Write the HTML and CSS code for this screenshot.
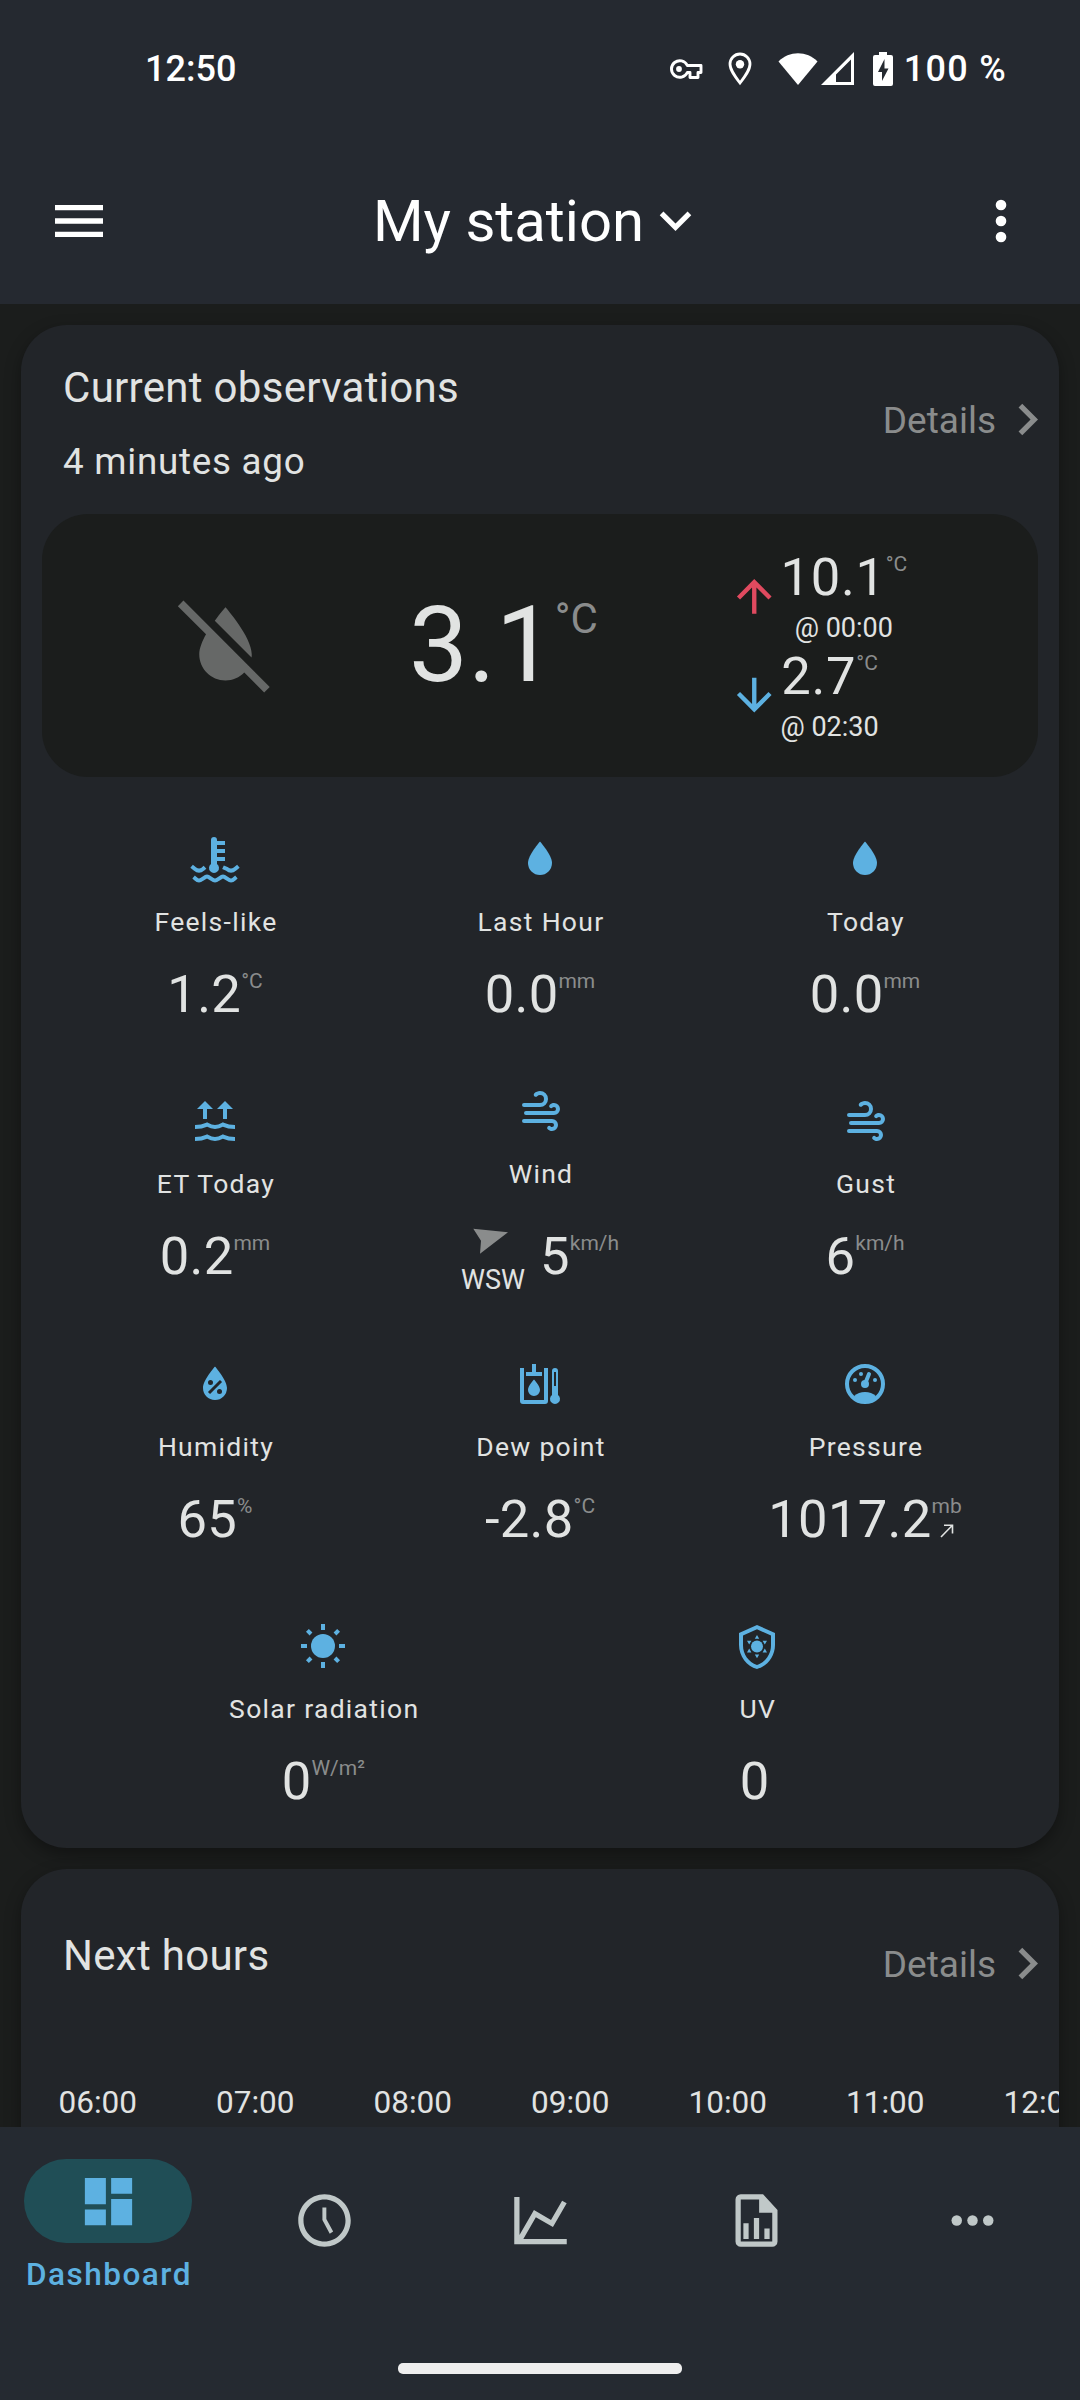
FILE: index.html
```html
<!DOCTYPE html>
<html lang="en">
<head>
  <meta charset="UTF-8">
  <title>My station</title>
  <meta name="viewport" content="width=device-width, initial-scale=1.0">
  <link rel="stylesheet" href="styles.css">
</head>
<body>
  <header class="header">
    <div class="statusbar">
      <span class="clock">12:50</span>
      <div class="status-icons">
        <svg class="st-key" width="34" height="22" viewBox="0 0 34 22"><path d="M18.3 7.5A8.3 8.3 0 1 0 18.3 14.5H21V19.5H29V14.5H32V7.5Z" fill="none" stroke="#fff" stroke-width="2.9" stroke-linejoin="round"/><circle cx="10" cy="11" r="2.9" fill="#fff"/></svg>
        <svg class="st-pin" width="24" height="34" viewBox="0 0 24 34"><path d="M12 31C7 24.5 2 18 2 12A10 10 0 0 1 22 12C22 18 17 24.5 12 31Z" fill="none" stroke="#fff" stroke-width="2.8"/><circle cx="12" cy="12.2" r="4.2" fill="#fff"/></svg>
        <svg class="st-wifi" width="40" height="34" viewBox="0 0 40 34"><path d="M20 33L.5 9.5C11-1.5 29-1.5 39.5 9.5Z" fill="#fff"/></svg>
        <svg class="st-signal" width="34" height="34" viewBox="0 0 34 34"><path d="M0 33L33 0V33ZM15 30H30V7.5L15 22.5Z" fill="#fff" fill-rule="evenodd"/></svg>
        <svg class="st-battery" width="20" height="34" viewBox="0 0 20 34"><path d="M6 0H14V3H18Q20 3 20 5V32Q20 34 18 34H2Q0 34 0 32V5Q0 3 2 3H6ZM11.5 7L5 20H9V29L15.5 16.5H11.5Z" fill="#fff" fill-rule="evenodd"/></svg>
        <span class="battery-text">100 %</span>
      </div>
    </div>
    <div class="appbar">
      <svg class="icon-64" viewBox="0 0 24 24"><path d="M3,6H21V8H3V6M3,11H21V13H3V11M3,16H21V18H3V16Z"/></svg>
      <div class="title">
        <span>My station</span>
        <svg class="icon-63" viewBox="0 0 24 24"><path d="M7.41,8.58L12,13.17L16.59,8.58L18,10L12,16L6,10L7.41,8.58Z"/></svg>
      </div>
      <svg class="icon-64" viewBox="0 0 24 24"><circle cx="12" cy="6" r="2"/><circle cx="12" cy="12" r="2"/><circle cx="12" cy="18" r="2"/></svg>
    </div>
  </header>

  <main class="content">
    <section class="card current">
      <div class="card-head">
        <div class="card-title">
          <h2>Current observations</h2>
          <p class="updated">4 minutes ago</p>
        </div>
        <a class="details"><span>Details</span><svg class="icon-63" viewBox="0 0 24 24"><path d="M8.59,16.58L13.17,12L8.59,7.41L10,6L16,12L10,18L8.59,16.58Z"/></svg></a>
      </div>

      <div class="hero">
        <div class="hero-icon">
          <svg width="105" height="105" viewBox="0 0 24 24"><path d="M20.84 22.73L16.29 18.18C15.2 19.3 13.69 20 12 20C8.69 20 6 17.31 6 14C6 12.67 6.67 11.03 7.55 9.44L1.11 3L2.39 1.73L22.11 21.46L20.84 22.73M18 14C18 10 12 3.25 12 3.25S10.84 4.55 9.55 6.35L17.95 14.75C18 14.5 18 14.25 18 14Z"/></svg>
        </div>
        <div class="hero-temp"><span>3.1</span><sup>°C</sup></div>
        <div class="minmax">
          <div class="minmax-row">
            <svg class="up" viewBox="0 0 24 24"><path d="M13,20H11V8L5.5,13.5L4.08,12.08L12,4.16L19.92,12.08L18.5,13.5L13,8V20Z"/></svg>
            <div class="minmax-text">
              <div class="value"><span>10.1</span><sup>°C</sup></div>
              <div class="time">@ 00:00</div>
            </div>
          </div>
          <div class="minmax-row">
            <svg class="down" viewBox="0 0 24 24"><path d="M11,4H13V16L18.5,10.5L19.92,11.92L12,19.84L4.08,11.92L5.5,10.5L11,16V4Z"/></svg>
            <div class="minmax-text">
              <div class="value"><span>2.7</span><sup>°C</sup></div>
              <div class="time">@ 02:30</div>
            </div>
          </div>
        </div>
      </div>

      <div class="grid">
        <div class="row">
          <div class="cell">
            <svg class="icon" viewBox="0 0 24 24">
              <path d="M10 2.5A1.5 1.5 0 0 1 13 2.5V3H17V5H13V7H17V9H13V11H17V13H13V14.5A2.5 2.5 0 1 1 10 14.5Z"/>
              <path class="line" d="M.3 15.6L2 17C3.3 18.1 4.7 18.1 6 17L7 16.1M16 16.1L18 17C19.3 18.1 20.7 18.1 22 17L23.7 15.6M1.3 21C2.5 22 3 22.8 4 22.8S7 20.8 8 20.8S11 22.8 12 22.8S15 20.8 16 20.8S19 22.8 20 22.8S21.5 22 22.7 21"/>
            </svg>
            <div class="label">Feels-like</div>
            <div class="value"><span>1.2</span><sup>°C</sup></div>
          </div>
          <div class="cell">
            <svg class="icon" viewBox="0 0 24 24"><path d="M12,20A6,6 0 0,1 6,14C6,10 12,3.25 12,3.25C12,3.25 18,10 18,14A6,6 0 0,1 12,20Z"/></svg>
            <div class="label">Last Hour</div>
            <div class="value"><span>0.0</span><sup>mm</sup></div>
          </div>
          <div class="cell">
            <svg class="icon" viewBox="0 0 24 24"><path d="M12,20A6,6 0 0,1 6,14C6,10 12,3.25 12,3.25C12,3.25 18,10 18,14A6,6 0 0,1 12,20Z"/></svg>
            <div class="label">Today</div>
            <div class="value"><span>0.0</span><sup>mm</sup></div>
          </div>
        </div>

        <div class="row">
          <div class="cell">
            <svg class="icon" viewBox="0 0 24 24">
              <path d="M7 2L11 6H8V11H6V6H3ZM17 2L21 6H18V11H16V6H13Z"/>
              <path class="line" d="M2 15C4.5 15 6 14.7 8 13.8C9.5 14.6 10.6 15 12 15S14.5 14.6 16 13.8C18 14.7 19.5 15 22 15M2 21C4.5 21 6 20.7 8 19.8C9.5 20.6 10.6 21 12 21S14.5 20.6 16 19.8C18 20.7 19.5 21 22 21"/>
            </svg>
            <div class="label">ET Today</div>
            <div class="value"><span>0.2</span><sup>mm</sup></div>
          </div>
          <div class="cell cell-wind">
            <svg class="icon" viewBox="0 0 24 24"><path d="M4,10A1,1 0 0,1 3,9A1,1 0 0,1 4,8H12A2,2 0 0,0 14,6A2,2 0 0,0 12,4C11.45,4 10.95,4.22 10.59,4.59C10.2,5 9.56,5 9.17,4.59C8.78,4.2 8.78,3.56 9.17,3.17C9.9,2.45 10.9,2 12,2A4,4 0 0,1 16,6A4,4 0 0,1 12,10H4M19,12A1,1 0 0,0 20,11A1,1 0 0,0 19,10C18.72,10 18.47,10.11 18.29,10.29C17.9,10.68 17.27,10.68 16.88,10.29C16.5,9.9 16.5,9.27 16.88,8.88C17.42,8.34 18.17,8 19,8A3,3 0 0,1 22,11A3,3 0 0,1 19,14H5A1,1 0 0,1 4,13A1,1 0 0,1 5,12H19M18,18H4A1,1 0 0,1 3,17A1,1 0 0,1 4,16H18A3,3 0 0,1 21,19A3,3 0 0,1 18,22C17.17,22 16.42,21.66 15.88,21.12C15.5,20.73 15.5,20.1 15.88,19.71C16.27,19.32 16.9,19.32 17.29,19.71C17.47,19.89 17.72,20 18,20A1,1 0 0,0 19,19A1,1 0 0,0 18,18Z"/></svg>
            <div class="label">Wind</div>
            <div class="wind">
              <div class="compass">
                <svg width="36" height="27" viewBox="0 0 36 27"><path d="M.3 .7L35 4.3L7 25.7L8 12.8Z"/></svg>
                <span>WSW</span>
              </div>
              <div class="value"><span>5</span><sup>km/h</sup></div>
            </div>
          </div>
          <div class="cell">
            <svg class="icon" viewBox="0 0 24 24"><path d="M4,10A1,1 0 0,1 3,9A1,1 0 0,1 4,8H12A2,2 0 0,0 14,6A2,2 0 0,0 12,4C11.45,4 10.95,4.22 10.59,4.59C10.2,5 9.56,5 9.17,4.59C8.78,4.2 8.78,3.56 9.17,3.17C9.9,2.45 10.9,2 12,2A4,4 0 0,1 16,6A4,4 0 0,1 12,10H4M19,12A1,1 0 0,0 20,11A1,1 0 0,0 19,10C18.72,10 18.47,10.11 18.29,10.29C17.9,10.68 17.27,10.68 16.88,10.29C16.5,9.9 16.5,9.27 16.88,8.88C17.42,8.34 18.17,8 19,8A3,3 0 0,1 22,11A3,3 0 0,1 19,14H5A1,1 0 0,1 4,13A1,1 0 0,1 5,12H19M18,18H4A1,1 0 0,1 3,17A1,1 0 0,1 4,16H18A3,3 0 0,1 21,19A3,3 0 0,1 18,22C17.17,22 16.42,21.66 15.88,21.12C15.5,20.73 15.5,20.1 15.88,19.71C16.27,19.32 16.9,19.32 17.29,19.71C17.47,19.89 17.72,20 18,20A1,1 0 0,0 19,19A1,1 0 0,0 18,18Z"/></svg>
            <div class="label">Gust</div>
            <div class="value"><span>6</span><sup>km/h</sup></div>
          </div>
        </div>

        <div class="row">
          <div class="cell">
            <svg class="icon" viewBox="0 0 24 24"><path fill-rule="evenodd" d="M12,3.25C12,3.25 6,10 6,14C6,17.32 8.69,20 12,20A6,6 0 0,0 18,14C18,10 12,3.25 12,3.25M14.47,9.97L15.53,11.03L9.53,17.03L8.47,15.97M9.75,10A1.25,1.25 0 0,1 11,11.25A1.25,1.25 0 0,1 9.75,12.5A1.25,1.25 0 0,1 8.5,11.25A1.25,1.25 0 0,1 9.75,10M14.25,14.5A1.25,1.25 0 0,1 15.5,15.75A1.25,1.25 0 0,1 14.25,17A1.25,1.25 0 0,1 13,15.75A1.25,1.25 0 0,1 14.25,14.5Z"/></svg>
            <div class="label">Humidity</div>
            <div class="value"><span>65</span><sup>%</sup></div>
          </div>
          <div class="cell">
            <svg class="icon" viewBox="0 0 24 24">
              <path d="M2 4H4V20H14V4H16V20.5A1.5 1.5 0 0 1 14.5 22H3.5A1.5 1.5 0 0 1 2 20.5ZM8 2H10V6H13V8H5V6H8ZM9 9.8C9 9.8 12 13 12 15A3 3 0 0 1 6 15C6 13 9 9.8 9 9.8Z"/>
              <path fill-rule="evenodd" d="M18 5.5A1.5 1.5 0 0 1 21 5.5V17.5A2.5 2.5 0 1 1 18 17.5ZM19 6V13H20V6Z"/>
            </svg>
            <div class="label">Dew point</div>
            <div class="value"><span>-2.8</span><sup>°C</sup></div>
          </div>
          <div class="cell">
            <svg class="icon" viewBox="0 0 24 24">
              <circle class="line" cx="12" cy="12" r="9"/>
              <path d="M6.6 18C8 16.7 9.9 16 12 16S16 16.7 17.4 18C16 20 14 21 12 21S8 20 6.6 18Z"/>
              <circle cx="7" cy="10" r="1"/><circle cx="10" cy="7" r="1"/><circle cx="17" cy="10" r="1"/><circle cx="12" cy="12" r="2"/>
              <path class="line round" d="M12.2 11.5L14 7"/>
            </svg>
            <div class="label">Pressure</div>
            <div class="value">
              <span>1017.2</span>
              <div class="unit-trend">
                <sup>mb</sup>
                <svg width="14" height="14" viewBox="0 0 14 14"><path d="M1 13L12.2 1.5M4 1.2H12.5V9.5" fill="none" stroke="#e1e3e2" stroke-width="1.6"/></svg>
              </div>
            </div>
          </div>
        </div>

        <div class="row row-two">
          <div class="cell">
            <svg class="icon" viewBox="0 0 24 24">
              <circle cx="12" cy="12" r="6"/>
              <path class="line" d="M12 1V4M12 20V23M1 12H4M20 12H23M4.2 4.2L6 6M18 18L19.8 19.8M4.2 19.8L6 18M18 6L19.8 4.2"/>
            </svg>
            <div class="label">Solar radiation</div>
            <div class="value"><span>0</span><sup>W/m²</sup></div>
          </div>
          <div class="cell">
            <svg class="icon" viewBox="0 -0.5 24 24">
              <path fill-rule="evenodd" d="M12,1L3,5V11C3,16.55 6.84,21.74 12,23C17.16,21.74 21,16.55 21,11V5L12,1M12,3.18L19,6.3V11.22C19,15.54 16.25,19.5 12,21C7.75,19.5 5,15.54 5,11.22V6.3L12,3.18Z"/>
              <circle cx="12" cy="11.8" r="3"/>
              <path d="M12 6L13.1 7.9H10.9ZM12 17.6L13.1 15.7H10.9ZM17 8.9L15.9 10.8L14.8 8.9ZM7 8.9L8.1 10.8L9.2 8.9ZM17 14.7L15.9 12.8L14.8 14.7ZM7 14.7L8.1 12.8L9.2 14.7Z"/>
            </svg>
            <div class="label">UV</div>
            <div class="value no-unit"><span>0</span></div>
          </div>
        </div>
      </div>
    </section>

    <section class="card next">
      <div class="card-head">
        <h2>Next hours</h2>
        <a class="details"><span>Details</span><svg class="icon-63" viewBox="0 0 24 24"><path d="M8.59,16.58L13.17,12L8.59,7.41L10,6L16,12L10,18L8.59,16.58Z"/></svg></a>
      </div>
      <div class="hours">
        <span>06:00</span><span>07:00</span><span>08:00</span><span>09:00</span><span>10:00</span><span>11:00</span><span>12:00</span>
      </div>
    </section>
  </main>

  <footer class="footer">
    <nav class="nav">
      <a class="nav-item active">
        <span class="pill"><svg class="icon-63" viewBox="0 0 24 24"><path d="M13,3V9H21V3M13,21H21V11H13M3,21H11V15H3M3,13H11V3H3V13Z"/></svg></span>
        <span class="nav-label">Dashboard</span>
      </a>
      <a class="nav-item"><svg class="icon-63" viewBox="0 0 24 24"><path d="M12 20C16.4 20 20 16.4 20 12S16.4 4 12 4 4 7.6 4 12 7.6 20 12 20M12 2C17.5 2 22 6.5 22 12S17.5 22 12 22C6.5 22 2 17.5 2 12C2 6.5 6.5 2 12 2M15.3 16.2L14 17L11.2 11.8V7H12.7V11.4L15.3 16.2Z"/></svg></a>
      <a class="nav-item"><svg class="icon-63" viewBox="0 0 24 24"><path d="M16,11.78L20.24,4.45L21.97,5.45L16.74,14.5L10.23,10.75L5.46,19H22V21H2V3H4V17.54L9.5,8L16,11.78Z"/></svg></a>
      <a class="nav-item"><svg class="icon-63" viewBox="0 0 24 24"><path fill-rule="evenodd" d="M6 2H14.5L20 8V20A2 2 0 0 1 18 22H6A2 2 0 0 1 4 20V4A2 2 0 0 1 6 2ZM6 4V20H18V9H13V4Z"/><path d="M7 13H9V19H7ZM11 11H13V19H11ZM15 15H17V19H15Z"/></svg></a>
      <a class="nav-item"><svg class="icon-63" viewBox="0 0 24 24"><circle cx="6" cy="12" r="2"/><circle cx="12" cy="12" r="2"/><circle cx="18" cy="12" r="2"/></svg></a>
    </nav>
    <div class="handle"></div>
  </footer>
</body>
</html>
```

FILE: styles.css
```css
html, body {
  margin: 0;
  padding: 0;
}

body {
  width: 1080px;
  height: 2400px;
  display: flex;
  flex-direction: column;
  overflow: hidden;
  background: #1b1d1c;
  color: #e1e3e2;
  font-family: Roboto, sans-serif;
}

svg {
  display: block;
  flex-shrink: 0;
}

h2, p {
  margin: 0;
}

sup {
  font-size: 21px;
  line-height: 25px;
  vertical-align: baseline;
  color: #8a8c8c;
}

.icon-63 {
  width: 63px;
  height: 63px;
  fill: currentColor;
}

.icon-64 {
  width: 64px;
  height: 64px;
  fill: currentColor;
}

/* header */
.header {
  height: 304px;
  background: #252930;
  color: #fff;
}

.statusbar {
  height: 137px;
  padding: 0 73px 0 145px;
  display: flex;
  align-items: center;
  justify-content: space-between;
}

.clock, .battery-text {
  font-size: 36px;
  line-height: 42px;
  font-weight: 500;
}

.status-icons {
  display: flex;
  align-items: center;
}

.st-pin {
  margin-left: 25px;
}

.st-wifi {
  margin-left: 26px;
}

.st-signal {
  margin-left: 3px;
}

.st-battery {
  margin-left: 18px;
}

.battery-text {
  margin-left: 11px;
  letter-spacing: 1.3px;
}

.appbar {
  height: 167px;
  padding: 0 47px;
  display: flex;
  align-items: center;
  justify-content: space-between;
}

.title {
  display: flex;
  align-items: center;
  font-size: 58px;
  line-height: 66px;
}

/* cards */
.content {
  flex: 1;
  min-height: 0;
  padding: 21px 21px 0;
  overflow: hidden;
}

.card {
  background: #222529;
  border-radius: 46px;
  box-shadow: 0 6px 16px rgba(0, 0, 0, 0.35);
}

.current {
  height: 1523px;
}

.card-head {
  display: flex;
  align-items: center;
  justify-content: space-between;
  padding-left: 42px;
  height: 189px;
}

.card-title {
  padding-top: 8px;
}

.card-head h2 {
  font-size: 42px;
  line-height: 50px;
  font-weight: 400;
  letter-spacing: 0.3px;
}

.updated {
  margin-top: 27px;
  font-size: 36.75px;
  line-height: 44px;
  letter-spacing: 0.75px;
}

.details {
  display: flex;
  align-items: center;
  font-size: 37px;
  line-height: 44px;
  color: #8a8c8c;
}

.details span {
  padding-top: 2px;
}

.hero {
  display: flex;
  align-items: center;
  height: 263px;
  margin: 0 21px;
  border-radius: 46px;
  background: #1b1d1c;
}

.hero-icon {
  width: 367px;
  display: flex;
  justify-content: center;
  fill: #666867;
}

.hero-temp {
  display: flex;
  align-items: flex-start;
  width: 319px;
  font-size: 105px;
  line-height: 124px;
}

.hero-temp sup {
  margin-top: 10px;
  font-size: 42px;
  line-height: 50px;
}

.minmax-row {
  display: flex;
  align-items: center;
  height: 98.5px;
}

.minmax-row svg {
  width: 52.5px;
  height: 52.5px;
}

.up {
  fill: #e04a5f;
}

.down {
  fill: #5db1e1;
}

.minmax-text {
  display: flex;
  flex-direction: column;
  align-items: center;
  padding-bottom: 3px;
}

.value {
  display: flex;
  align-items: flex-start;
  font-size: 52.5px;
  line-height: 62px;
  letter-spacing: 0.3px;
}

.value sup {
  margin-top: 6px;
  letter-spacing: 0;
}

.minmax .value {
  letter-spacing: 0.7px;
}

.time {
  margin-top: 5px;
  font-size: 27px;
  line-height: 30px;
}

.grid {
  padding: 21px 31.5px 0;
}

.row {
  display: flex;
  height: 262.3px;
}

.row-two {
  padding: 0 54px;
}

.cell {
  flex: 1;
  display: flex;
  flex-direction: column;
  align-items: center;
}

.icon {
  width: 48px;
  height: 48px;
  margin-top: 37px;
  fill: #5db1e1;
  overflow: visible;
}

.icon .line {
  fill: none;
  stroke: #5db1e1;
  stroke-width: 2;
}

.icon .round {
  stroke-linecap: round;
}

.label {
  margin-top: 22px;
  padding-left: 2px;
  font-size: 26.5px;
  line-height: 34px;
  letter-spacing: 1.3px;
}

.cell > .value {
  margin-top: 24px;
}

.cell-wind .icon {
  margin-top: 27px;
}

.wind {
  display: flex;
  gap: 15px;
  margin-top: 34px;
}

.compass {
  display: flex;
  flex-direction: column;
  align-items: center;
  padding-top: 3px;
  font-size: 27px;
  line-height: 30px;
}

.compass svg {
  fill: #8a8c8c;
  margin: 0 4px 10px 0;
}

.no-unit {
  padding-right: 4px;
}

.unit-trend {
  display: flex;
  flex-direction: column;
  align-items: center;
}

.unit-trend svg {
  margin-top: 5px;
}

/* next hours */
.next {
  height: 400px;
  margin-top: 21px;
  overflow: hidden;
}

.next h2 {
  padding-bottom: 15px;
}

.hours {
  display: flex;
  margin: 26px 0 0 -2px;
  font-size: 31.5px;
  line-height: 38px;
}

.hours span {
  flex: 0 0 157.5px;
  text-align: center;
}

/* bottom navigation */
.footer {
  height: 273px;
  background: #252a31;
  color: #c0c8c8;
}

.nav {
  display: flex;
  height: 236px;
}

.nav-item {
  width: 216px;
  display: flex;
  flex-direction: column;
  align-items: center;
  padding-top: 62px;
  box-sizing: border-box;
}

.nav-item.active {
  padding-top: 32px;
  color: #5db1e1;
}

.pill {
  width: 168px;
  height: 84px;
  border-radius: 42px;
  background: #204e56;
  display: flex;
  align-items: center;
  justify-content: center;
}

.nav-label {
  margin-top: 13px;
  padding-left: 2px;
  font-size: 31.5px;
  line-height: 38px;
  font-weight: 500;
  letter-spacing: 1.5px;
}

.handle {
  width: 284px;
  height: 11px;
  margin: 0 auto;
  border-radius: 5px;
  background: #eee;
}
```
